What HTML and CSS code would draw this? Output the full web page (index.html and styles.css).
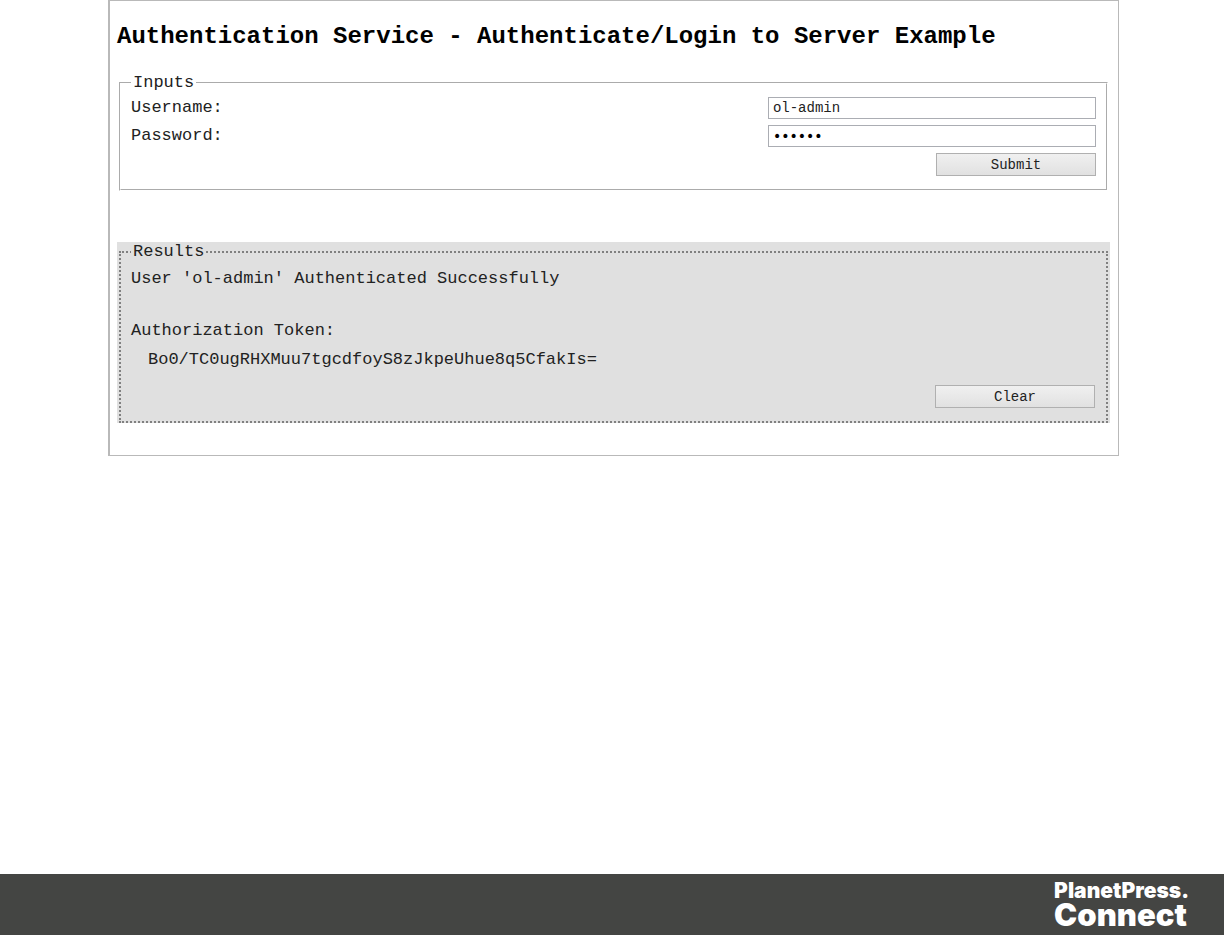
FILE: index.html
```
<!DOCTYPE html>
<html lang="en">
<head>
  <meta charset="UTF-8">
  <title>Authentication Service - Authenticate/Login to Server Example</title>
  <link rel="stylesheet" href="styles.css">
</head>
<body>
  <main class="example">
    <h1>Authentication Service - Authenticate/Login to Server Example</h1>

    <form id="inputs">
      <fieldset class="inputs">
        <legend>Inputs</legend>
        <div class="row">
          <label for="username">Username:</label>
          <input type="text" id="username" value="ol-admin">
        </div>
        <div class="row">
          <label for="password">Password:</label>
          <input type="password" id="password" value="secret">
        </div>
        <div class="actions">
          <button type="button" id="submit">Submit</button>
        </div>
      </fieldset>
    </form>

    <div class="results-panel">
      <fieldset class="results">
        <legend>Results</legend>
        <p class="message">User 'ol-admin' Authenticated Successfully</p>
        <p>Authorization Token:</p>
        <p class="token">Bo0/TC0ugRHXMuu7tgcdfoyS8zJkpeUhue8q5CfakIs=</p>
        <div class="actions">
          <button type="button" id="clear">Clear</button>
        </div>
      </fieldset>
    </div>
  </main>

  <footer>
    <div class="logo">
      <span class="logo-top">PlanetPress.</span>
      <span class="logo-bottom">Connect</span>
    </div>
  </footer>
</body>
</html>
```
FILE: styles.css
```
* {
  box-sizing: border-box;
}

body {
  display: flex;
  flex-direction: column;
  margin: 0;
  min-height: 100vh;
  background: #fff;
  color: #222;
  font-family: "Liberation Mono", monospace;
  font-size: 17px;
  line-height: 20px;
}

.example {
  margin: 0 105px 0 108px;
  padding: 20px 8px 32px 7px;
  border: 1px solid #b9b9b9;
  border-left-width: 2px;
}

h1 {
  margin: 0 0 20px;
  color: #000;
  font-size: 24px;
  line-height: 32px;
}

fieldset {
  margin: 0 2px;
  min-width: 0;
}

legend {
  padding: 0 2px;
}

p {
  margin: 0;
}

.inputs {
  padding: 4px 10px 13px;
  border: 2px groove #fff;
}

.row {
  display: flex;
  justify-content: space-between;
  align-items: center;
  margin-bottom: 6px;
}

input {
  width: 34%;
  height: 22px;
  padding: 0 4px;
  border: 1px solid #abadb3;
  background: #fff;
  color: #222;
  font-family: inherit;
  font-size: 14px;
}

input[type="password"] {
  color: #000;
  font-family: "DejaVu Sans", sans-serif;
}

.actions {
  display: flex;
  justify-content: flex-end;
}

button {
  width: 160px;
  height: 23px;
  padding: 0;
  border: 1px solid #b0b0b0;
  background: linear-gradient(#f0f0f0, #e1e1e1);
  color: #222;
  font-family: inherit;
  font-size: 14px;
}

/* the grey goes past the dotted border, behind the legend too */
.results-panel {
  margin-top: 51px;
  background: #e0e0e0;
}

.results {
  padding: 7px 11px 13px 10px;
  border: 2px dotted #808080;
}

.message {
  margin-bottom: 32px;
}

.token {
  margin: 9px 0 15px;
  padding-left: 17px;
  overflow-wrap: anywhere;
}

footer {
  display: flex;
  justify-content: flex-end;
  margin-top: auto;
  padding: 6px 35px 7px;
  background: #444543;
}

.logo {
  display: flex;
  flex-direction: column;
  color: #fff;
  font-family: Inter, sans-serif;
  font-weight: 900;
}

.logo-top {
  font-size: 21px;
  line-height: 22px;
}

.logo-bottom {
  font-size: 31px;
  line-height: 26px;
}
```
